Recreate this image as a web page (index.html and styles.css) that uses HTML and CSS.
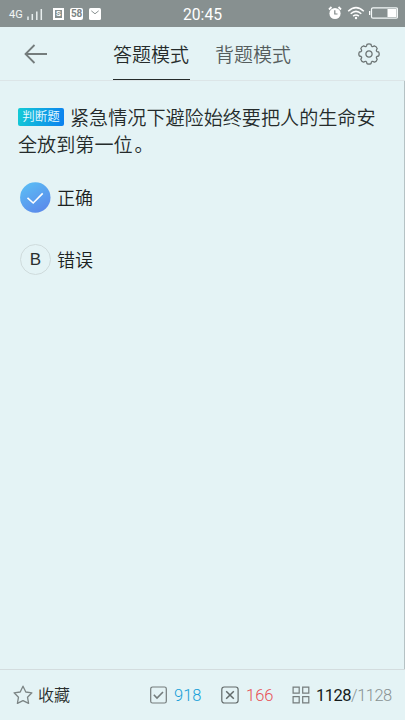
FILE: index.html
```
<!DOCTYPE html>
<html lang="zh-CN">
<head>
<meta charset="utf-8">
<title>答题模式</title>
<link rel="stylesheet" href="styles.css">
</head>
<body>
<div class="app">
  <div class="status">
    <div class="status-left">
      <span class="net">4G</span>
      <svg class="signal" width="16" height="12" viewBox="0 0 16 12" stroke="#e8eeee" stroke-width="1.5"><path d="M1 12V8.5M5.3 12V6M9.8 12V3.5M14.3 12V1"/></svg>
      <span class="app-s">S</span>
      <span class="app-58">58</span>
      <svg class="mail" width="12" height="12" viewBox="0 0 12 12"><rect width="12" height="12" rx="1.5" fill="#fff"/><path d="M2.3 2.8L6 5.8L9.7 2.8" fill="none" stroke="#8a9292" stroke-width="1"/></svg>
    </div>
    <div class="clock">20:45</div>
    <div class="status-right">
      <svg class="alarm" width="14" height="14" viewBox="0 0 14 14"><circle cx="7" cy="7.5" r="5.6" fill="#fff"/><path d="M1 3.5L3.5 1M13 3.5L10.5 1" stroke="#fff" stroke-width="1.8"/><path d="M6.8 4.2V8H9.5" fill="none" stroke="#7f8888" stroke-width="1.2"/></svg>
      <svg class="wifi" width="18" height="14" viewBox="0 0 18 14" fill="none" stroke="#fff" stroke-width="1.5"><path d="M1.2 5.2Q9-2 16.8 5.2M3.7 7.8Q9 3 14.3 7.8M6.1 10.2Q9 7.8 11.9 10.2"/><circle cx="9" cy="12" r="1.2" fill="#fff" stroke="none"/></svg>
      <svg class="battery" width="29" height="12" viewBox="0 0 29 12"><path d="M.5 4v4" stroke="#fff" stroke-width="1.6"/><rect x="2.5" y=".8" width="26" height="10.4" rx="1.5" fill="none" stroke="#f4f8f8" stroke-width="1.2"/><rect x="18.5" y="2" width="9" height="8" fill="#fff"/></svg>
    </div>
  </div>
  <header class="header">
    <svg class="back" width="24" height="20" viewBox="0 0 24 20" fill="none" stroke="#747c7c" stroke-width="1.8"><path d="M23 10H1.5M10.5 1L1.5 10L10.5 19"/></svg>
    <nav class="tabs">
      <span class="tab active">答题模式</span>
      <span class="tab">背题模式</span>
    </nav>
    <svg class="gear" width="22" height="22" viewBox="-11 -11 22 22" fill="none" stroke="#6c7474" stroke-width="1.3" stroke-linejoin="round"><path d="M9.65-2Q10.7 0 9.65 2Q6 2.5 8.19 5.4Q7.6 7.6 5.4 8.19Q2.5 6 2 9.65Q0 10.7-2 9.65Q-2.5 6-5.4 8.19Q-7.6 7.6-8.19 5.4Q-6 2.5-9.65 2Q-10.7 0-9.65-2Q-6-2.5-8.19-5.4Q-7.6-7.6-5.4-8.19Q-2.5-6-2-9.65Q0-10.7 2-9.65Q2.5-6 5.4-8.19Q7.6-7.6 8.19-5.4Q6-2.5 9.65-2Z"/><circle r="3.1"/></svg>
  </header>
  <main class="content">
    <p class="question"><span class="tag">判断题</span>紧急情况下避险始终要把人的生命安全放到第一位<span class="stop">。</span></p>
    <div class="option">
      <svg class="mark" width="31" height="31" viewBox="0 0 31 31"><defs><linearGradient id="blue" x1="0.2" y1="0" x2="0.8" y2="1"><stop offset="0" stop-color="#5bbdf5"/><stop offset="1" stop-color="#5b87ea"/></linearGradient></defs><circle cx="15.3" cy="15.5" r="15.2" fill="url(#blue)"/><path d="M7.5 15.8L13.2 21L22.7 11.4" fill="none" stroke="#fff" stroke-width="1.6"/></svg>
      <span class="answer">正确</span>
    </div>
    <div class="option">
      <span class="mark letter">B</span>
      <span class="answer">错误</span>
    </div>
  </main>
  <footer class="footer">
    <svg class="star" width="20" height="20" viewBox="0 0 20 20" fill="none" stroke="#7c8585" stroke-width="1.3" stroke-linejoin="round"><path d="M10 1.2L12.8 7L18.9 7.8L14.5 12.2L15.6 18.4L10 15.6L4.4 18.4L5.5 12.2L1.1 7.8L7.2 7Z"/></svg>
    <span class="fav">收藏</span>
    <svg class="right-icon" width="17" height="18" viewBox="0 0 17 18" fill="none" stroke="#747c7c"><rect x=".7" y="1" width="15.6" height="16" rx="1.8" stroke-width="1.2"/><path d="M3.8 8.8L7 12L13 6" stroke-width="1.6"/></svg>
    <span class="num right">918</span>
    <svg class="wrong-icon" width="18" height="18" viewBox="0 0 18 18" fill="none" stroke="#626a6a"><rect x=".8" y="1" width="16.3" height="16" rx="2.4" stroke-width="1.2"/><path d="M5.2 5.2L12.8 12.8M12.8 5.2L5.2 12.8" stroke-width="1.5"/></svg>
    <span class="num wrong">166</span>
    <svg class="grid" width="18" height="18" viewBox="0 0 18 18" fill="none" stroke="#747c7c" stroke-width="1.2"><path d="M1.1 1.1h6.1v6.1H1.1zM10.7 1.1h6.1v6.1h-6.1zM1.1 10.7h6.1v6.1H1.1zM10.7 10.7h6.1v6.1h-6.1z"/></svg>
    <span class="num progress"><b>1128</b>/1128</span>
  </footer>
</div>
</body>
</html>
```
FILE: styles.css
```
* { box-sizing: border-box; }
body {
  margin: 0;
  background: #e4f3f5;
  color: #2b3030;
  font-family: Roboto, "Noto Sans CJK SC", sans-serif;
}
svg { display: block; flex: none; }
.app { display: flex; flex-direction: column; width: 405px; height: 720px; overflow: hidden; }
.status {
  display: grid;
  grid-template-columns: 1fr auto 1fr;
  align-items: center;
  height: 27px;
  padding: 0 7px 0 9px;
  background: #879090;
  color: #fff;
}
.status-left, .status-right { display: flex; align-items: center; }
.status-right { justify-content: flex-end; margin-top: -1px; }
.net { width: 18px; padding-top: 3px; font-size: 11px; line-height: 12px; color: #f2f6f6; }
.signal { margin-top: 1px; }
.app-s, .app-58 { height: 12px; font-weight: 700; text-align: center; }
.app-s { width: 11px; margin-left: 10px; border: 2px solid #fff; font-size: 8px; line-height: 8px; }
.app-58 { width: 13px; margin-left: 6px; border-radius: 2px; background: #fff; color: #7b8484; font-size: 10px; line-height: 12px; letter-spacing: -.3px; }
.mail { margin-left: 6px; }
.clock { margin-left: -2px; font-size: 15.7px; line-height: 20px; padding-top: 2px; }
.wifi { margin-left: 5px; }
.battery { margin-left: 4px; }
.header {
  display: flex;
  flex: none;
  height: 54px;
  padding: 0 25px 0 24px;
  border-bottom: 1px solid #dce5e7;
}
.back { margin-top: 17px; }
.tabs { display: flex; gap: 25px; margin-left: 65px; }
.tab { width: 77px; height: 53px; font-size: 19px; line-height: 57px; white-space: nowrap; font-weight: 350; color: #555d5d; }
.active { border-bottom: 1.5px solid #252b2b; color: #252b2b; }
.gear { margin: 16px 0 0 auto; }
.content { flex: 1; padding: 24px 18px 0; border-right: 1px solid #b5c2c4; }
.question { margin: 0; width: 366px; font-size: 19.1px; line-height: 27px; font-weight: 350; color: #252b2b; }
.tag {
  display: inline-block;
  width: 46px;
  height: 18px;
  margin-right: 6px;
  border-radius: 2px;
  background: linear-gradient(100deg, #14cbd5, #0b80f0);
  color: #e9fbff;
  font-size: 12.5px;
  font-weight: 350;
  line-height: 17px;
  text-align: center;
  vertical-align: 4px;
}
.stop { margin-left: 2px; }
.option { display: flex; align-items: center; height: 31px; margin: 23px 0 0 2px; font-size: 18px; gap: 6px; }
.option + .option { margin-top: 31px; }
.answer { padding-bottom: 2px; font-weight: 350; color: #1c2222; }
.mark { width: 31px; height: 31px; }
.letter { border: 1px solid #cfdbdc; border-radius: 50%; font-family: "Liberation Sans", sans-serif; font-size: 17px; line-height: 30px; text-align: center; }
.footer {
  display: flex;
  flex: none;
  align-items: center;
  height: 51px;
  padding: 0 0 1px 13px;
  border-top: 1px solid #d3dcde;
}
.fav { width: 32px; margin-left: 5px; padding-bottom: 1px; font-size: 16px; font-weight: 350; }
.num { padding-top: 1px; font-size: 16.5px; font-weight: 300; white-space: nowrap; }
.right-icon { margin-left: 80px; }
.right { width: 28px; margin-left: 7px; color: #159ed8; }
.wrong-icon { margin-left: 19px; }
.wrong { width: 28px; margin-left: 7px; color: #e84f55; }
.grid { margin-left: 18px; }
.progress { margin-left: 6px; letter-spacing: -.5px; color: #899293; }
.progress b { font-weight: 400; color: #151a1a; }
```
